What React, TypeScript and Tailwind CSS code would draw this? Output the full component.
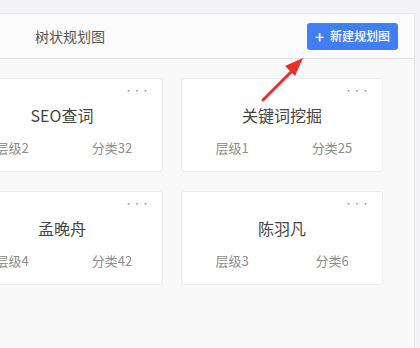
import React from 'react'

interface Plan {
  name: string
  level: number
  branches: number
}

const plans: Plan[] = [
  { name: 'SEO查词', level: 2, branches: 32 },
  { name: '关键词挖掘', level: 1, branches: 25 },
  { name: '孟晚舟', level: 4, branches: 42 },
  { name: '陈羽凡', level: 3, branches: 6 },
]

function PlanCard({ plan }: { plan: Plan }) {
  return (
    <div className="relative h-[94px] rounded-[3px] border border-[#ececee] bg-white">
      <span className="absolute right-[12px] top-[7px] text-[8px] leading-[10px] tracking-[0.5px] text-[#8a8a8a]">···</span>
      <div className="pt-[25px] text-center text-[16px] leading-[22px] text-[#444]">{plan.name}</div>
      <div className="mt-[13px] grid grid-cols-2 text-[13px] leading-[18px] text-[#8c8c8c]">
        <span className="text-center">层级{plan.level}</span>
        <span className="text-center">分类{plan.branches}</span>
      </div>
    </div>
  )
}

export default function App() {
  return (
    <div
      className="relative h-[348px] w-[420px] overflow-hidden bg-[#f3f3f5] pr-[5px] pt-[13px]"
      style={{ fontFamily: '"Noto Sans CJK SC", "Noto Sans", sans-serif' }}
    >
      <div className="flex h-full flex-col border-r border-t border-[#e8e8ea] bg-[#fbfbfc]">
        <header className="flex h-[45px] shrink-0 items-center justify-between border-b border-[#e4e4e6] pl-[35px] pr-[16px]">
          <h1 className="text-[14px] text-[#555]">树状规划图</h1>
          <button className="flex h-[27px] w-[91px] items-center justify-center gap-[6px] rounded-[3px] bg-[#3f7ff2] text-[12px] font-medium text-white">
            <span className="text-[16px] leading-none">+</span>
            新建规划图
          </button>
        </header>
        <div className="flex-1 bg-[#f9f9fa] pt-[19px]">
          <div className="ml-[-39px] grid w-[422px] grid-cols-[202px_202px] gap-x-[18px] gap-y-[19px]">
            {plans.map((p) => (
              <PlanCard key={p.name} plan={p} />
            ))}
          </div>
        </div>
      </div>

      {/* red annotation arrow */}
      <svg className="absolute left-[255px] top-[52px]" width="56" height="54" viewBox="0 0 56 54">
        <line x1="8" y1="48" x2="40" y2="16" stroke="#e8302a" strokeWidth="3" strokeLinecap="round" />
        <polygon points="48,6 30,14 40,24" fill="#e8302a" />
      </svg>
    </div>
  )
}
